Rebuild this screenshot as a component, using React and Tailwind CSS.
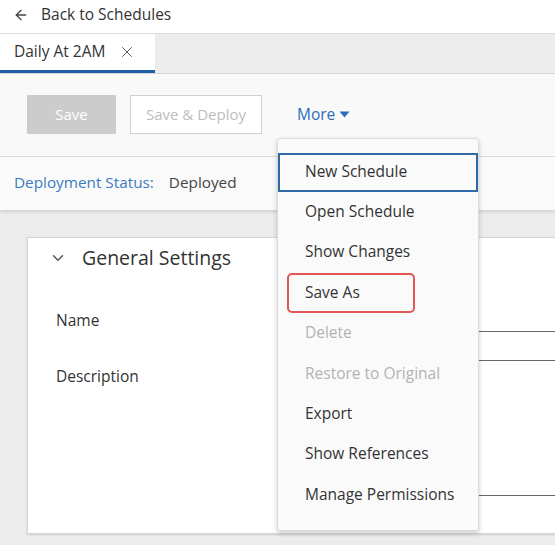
import React from 'react'
import { ArrowLeft, X, ChevronDown } from 'lucide-react'

const menuItems = [
  { label: 'New Schedule', focus: true },
  { label: 'Open Schedule' },
  { label: 'Show Changes' },
  { label: 'Save As', marked: true },
  { label: 'Delete', disabled: true },
  { label: 'Restore to Original', disabled: true },
  { label: 'Export' },
  { label: 'Show References' },
  { label: 'Manage Permissions' },
]

const MoreMenu = () => {
  return (
    <div className='absolute left-[277px] top-[64px] w-[202px] h-[393px] bg-[#fafafa] border border-[#dcdcdc] rounded-[3px] shadow-[0_2px_5px_rgba(0,0,0,0.2)] pt-[14px] z-10'>
      {menuItems.map((item) => (
        <div key={item.label} className='relative h-[40.4px] flex items-center'>
          {item.focus && (
            <div className='absolute inset-x-0 top-0 h-[39px] border-2 border-[#2f69a7]'></div>
          )}
          {item.marked && (
            <div className='absolute left-[9px] w-[128px] top-[-1px] h-[40px] border-2 border-[#e45656] rounded-[5px]'></div>
          )}
          <span
            className={
              'relative pl-[27px] text-[15.5px] -mt-[4px] ' +
              (item.disabled ? 'text-[#b3b3b3]' : 'text-[#333]')
            }
          >
            {item.label}
          </span>
        </div>
      ))}
    </div>
  )
}

export default function App() {
  return (
    <div className="w-[555px] h-[545px] overflow-hidden relative bg-[#ececec] font-['Open_Sans',sans-serif] text-[#333]">
      {/* back link */}
      <div className='h-[34px] bg-white border-b border-[#dcdcdc] flex items-center pl-[13px]'>
        <ArrowLeft size={16} strokeWidth={2} className='text-[#444] -mt-[4px]' />
        <span className='ml-[12px] text-[15.5px] text-[#333] -mt-[4px]'>Back to Schedules</span>
      </div>

      {/* tabs */}
      <div className='h-[40px] bg-[#ececec] border-b border-[#d6d6d6] flex'>
        <div className='w-[155px] bg-white border-b-[3px] border-[#1a5fa8] flex items-center pl-[14px]'>
          <span className='text-[15.5px] text-[#333]'>Daily At 2AM</span>
          <X size={18} strokeWidth={1.3} className='ml-[13px] text-[#555]' />
        </div>
      </div>

      {/* toolbar */}
      <div className='relative h-[83px] bg-[#f9f9f9] border-b border-[#dcdcdc] flex items-start pt-[21px] pl-[27px]'>
        <button className='w-[89px] h-[39px] bg-[#cccccc] text-white text-[15px] rounded-[1px]'>Save</button>
        <button className='ml-[14px] w-[132px] h-[39px] border border-[#d0d0d0] bg-white text-[#bdbdbd] text-[15px]'>Save &amp; Deploy</button>
        <button className='ml-[35px] h-[39px] flex items-center text-[15.5px] text-[#2a6db8]'>
          More
          <svg width='11' height='7' viewBox='0 0 11 7' className='ml-[4px]'>
            <path d='M0.5 0.5 L10.5 0.5 L5.5 6.5 Z' fill='#2a6db8' />
          </svg>
        </button>
        <MoreMenu />
      </div>

      {/* deployment status */}
      <div className='h-[53px] bg-[#fafafa] shadow-[0_2px_3px_rgba(0,0,0,0.12)] flex items-center pl-[14px] text-[15.3px] relative'>
        <span className='text-[#3a7bc0] -mt-[2px]'>Deployment Status:</span>
        <span className='ml-[15px] text-[#444] -mt-[2px]'>Deployed</span>
      </div>

      {/* content */}
      <div className='pt-[27px] pl-[27px]'>
        <div className='w-[600px] h-[297px] bg-white border border-[#d4d4d4] shadow-[0_1px_2px_rgba(0,0,0,0.12)]'>
          <div className='flex items-center pt-[8px] pl-[21px] h-[32px]'>
            <ChevronDown size={18} strokeWidth={2} className='text-[#555]' />
            <span className='ml-[15px] text-[19.5px] text-[#333]'>General Settings</span>
          </div>
          <div className='grid grid-cols-[320px_1fr] mt-[27px]'>
            <div className='pl-[28px] pt-[12px] h-[35px] text-[15.5px] text-[#333] leading-[22px]'>Name</div>
            <div className='h-[35px] border-b border-[#666]'></div>
            <div className='pl-[28px] pt-[33px] text-[15.5px] text-[#333] leading-[22px]'>Description</div>
            <div className='mt-[28px] h-[136px] border-y border-[#666]'></div>
          </div>
        </div>
      </div>
    </div>
  )
}
